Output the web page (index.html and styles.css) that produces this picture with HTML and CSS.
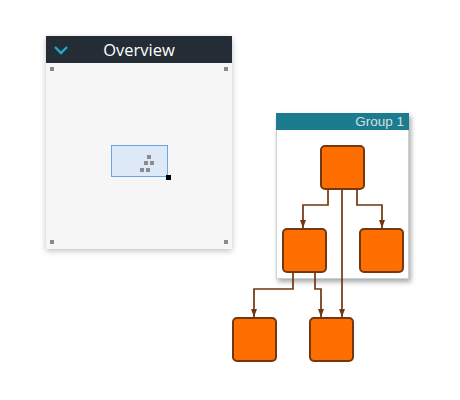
FILE: index.html
```html
<!DOCTYPE html>
<html lang="en">
<head>
  <meta charset="UTF-8">
  <title>Diagram</title>
  <link rel="stylesheet" href="styles.css">
</head>
<body>
  <div class="canvas">

    <!-- group -->
    <div class="group">
      <div class="group-header">Group 1</div>
    </div>

    <!-- edges -->
    <svg class="edges" width="460" height="400" viewBox="0 0 460 400">
      <defs>
        <marker id="arrow" viewBox="0 0 8 6" refX="8" refY="3" markerWidth="8" markerHeight="6" markerUnits="userSpaceOnUse" orient="auto">
          <path d="M0,0 L8,3 L0,6 Z" fill="#703610"/>
        </marker>
      </defs>
      <g fill="none" stroke="#703610" stroke-width="1.7">
        <path d="M328,190 V205 H303 V228" marker-end="url(#arrow)"/>
        <path d="M357,190 V205 H382 V228" marker-end="url(#arrow)"/>
        <path d="M342,190 V317" marker-end="url(#arrow)"/>
        <path d="M293,272 V289 H254 V317" marker-end="url(#arrow)"/>
        <path d="M315,272 V289 H321 V317" marker-end="url(#arrow)"/>
      </g>
    </svg>

    <!-- nodes -->
    <div class="node" style="left:320px; top:145px"></div>
    <div class="node" style="left:282px; top:228px"></div>
    <div class="node" style="left:359px; top:228px"></div>
    <div class="node" style="left:232px; top:317px"></div>
    <div class="node" style="left:309px; top:317px"></div>

    <!-- overview -->
    <div class="overview">
      <div class="overview-header">
        <svg class="chevron" width="16" height="10" viewBox="0 0 16 10">
          <path d="M2,2 L8,8 L14,2" fill="none" stroke="#1fa9d6" stroke-width="2.4"/>
        </svg>
        <span>Overview</span>
      </div>
      <div class="overview-body">
        <i class="dot tl"></i>
        <i class="dot tr"></i>
        <i class="dot bl"></i>
        <i class="dot br"></i>
        <div class="viewport">
          <i class="mini" style="left:35px; top:9px"></i>
          <i class="mini" style="left:32px; top:15px"></i>
          <i class="mini" style="left:38px; top:15px"></i>
          <i class="mini" style="left:28px; top:22px"></i>
          <i class="mini" style="left:34px; top:22px"></i>
          <i class="handle"></i>
        </div>
      </div>
    </div>

  </div>
</body>
</html>
```

FILE: styles.css
```css
body {
  margin: 0;
  background: #ffffff;
  font-family: "Open Sans", "Noto Sans", sans-serif;
}

.canvas {
  position: relative;
  width: 460px;
  height: 400px;
  overflow: hidden;
}

.edges {
  position: absolute;
  left: 0;
  top: 0;
}

.group {
  position: absolute;
  left: 276px;
  top: 113px;
  width: 131px;
  height: 165px;
  background: #ffffff;
  border: 1px solid #c9d3d6;
  border-top: none;
  box-shadow: 2px 3px 5px rgba(0, 0, 0, 0.35);
}

.group-header {
  height: 17px;
  background: #1c7b8c;
  color: #d3e0e3;
  font-family: "Liberation Sans", Arial, sans-serif;
  font-size: 13.5px;
  line-height: 18px;
  text-align: right;
  padding-right: 5px;
  margin: 0 -1px;
}

.node {
  position: absolute;
  width: 41px;
  height: 41px;
  background: #ff6f00;
  border: 2px solid #733810;
  border-radius: 5px;
}

.overview {
  position: absolute;
  left: 46px;
  top: 36px;
  width: 186px;
  display: flex;
  flex-direction: column;
  box-shadow: 0 2px 6px rgba(0, 0, 0, 0.25);
}

.overview-header {
  height: 27px;
  background: #242d36;
  color: #ffffff;
  font-size: 16.5px;
  display: flex;
  align-items: center;
  justify-content: center;
  position: relative;
}

.chevron {
  position: absolute;
  left: 7px;
  top: 9px;
}

.overview-body {
  position: relative;
  height: 186px;
  background: #f6f6f7;
}

.dot {
  position: absolute;
  width: 4px;
  height: 4px;
  background: #8a8a8a;
}

.dot.tl { left: 4px; top: 4px; }
.dot.tr { right: 4px; top: 4px; }
.dot.bl { left: 4px; bottom: 5px; }
.dot.br { right: 4px; bottom: 5px; }

.viewport {
  position: absolute;
  left: 65px;
  top: 82px;
  width: 55px;
  height: 30px;
  background: #dde9f7;
  border: 1px solid #6aa6e0;
}

.mini {
  position: absolute;
  width: 4px;
  height: 4px;
  background: #8c8c8c;
}

.handle {
  position: absolute;
  right: -4px;
  bottom: -4px;
  width: 5px;
  height: 5px;
  background: #000000;
}
```
